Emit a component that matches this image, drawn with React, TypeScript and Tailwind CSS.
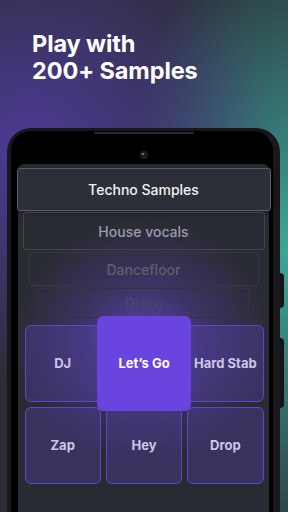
const pads = ["DJ", "Let's Go", "Hard Stab", "Zap", "Hey", "Drop"];

export default function App() {
  return (
    <div
      className="relative w-[288px] h-[512px] overflow-hidden bg-[#2b2d37] bg-[radial-gradient(ellipse_260px_230px_at_10%_150px,#4d3a94_0%,rgba(77,58,148,0.6)_45%,transparent_100%),radial-gradient(ellipse_170px_330px_at_100%_250px,#3ba899_0%,rgba(59,168,153,0.5)_50%,transparent_100%)]"
      style={{ fontFamily: "Inter, 'Noto Sans', sans-serif" }}
    >
      <div className="pt-[30px] pl-[32px] text-[23.5px] leading-[27px] font-bold text-white tracking-[-0.1px]">
        <div>Play with</div>
        <div>200+ Samples</div>
      </div>

      <div className="relative mt-[44px] ml-[7px] w-[273px] h-[384px] bg-[#18181b] rounded-t-[24px] pt-[3px] pl-[4px] pr-[7px]">
        <div className="absolute right-[-4px] top-[145px] w-[4px] h-[35px] bg-[#141416] rounded-r-sm" />
        <div className="absolute right-[-4px] top-[210px] w-[4px] h-[70px] bg-[#141416] rounded-r-sm" />
        <div className="h-full bg-black rounded-t-[20px] pl-[7px] pr-[4px] flex flex-col items-center">
          <div className="mt-[1px] h-[2px] w-[100px] rounded-full bg-[#2a2a2f]" />
          <div className="mt-[17px] w-[8px] h-[8px] rounded-full bg-[#1c1e26] flex items-start justify-start p-[2px]">
            <div className="w-[2px] h-[2px] bg-[#6b6e78]" />
          </div>
          <div className="mt-[5px] self-stretch flex-1 rounded-t-[6px] bg-[#292b33] bg-[radial-gradient(ellipse_130px_120px_at_50%_175px,rgba(120,78,250,0.6)_0%,rgba(120,78,250,0.25)_45%,transparent_100%)] flex flex-col items-center">
            <div className="mt-[4px] w-[254px] h-[43px] shrink-0 flex items-center justify-center bg-[#2c2f38] border border-[#5a5d66] rounded-[3px] text-[14px] font-medium text-[#f2f2f5] shadow-[0_2px_4px_rgba(0,0,0,0.3)]">
              Techno Samples
            </div>
            <div className="mt-[1px] w-[242px] h-[38px] shrink-0 flex items-center justify-center border border-[#41444d] rounded-[3px] text-[14px] font-medium text-[#9a9ca6]">
              House vocals
            </div>
            <div className="mt-[2px] w-[230px] h-[34px] shrink-0 flex items-center justify-center border border-[#363942] rounded-[3px] text-[14px] font-medium text-[#5d6069]">
              Dancefloor
            </div>
            <div className="mt-[2px] w-[211px] h-[30px] shrink-0 flex items-center justify-center border border-[#33353e] rounded-[3px] text-[14px] font-medium text-[#4a4862]">
              Disco
            </div>
            <div className="mt-[7px] ml-[1px] w-[239px] grid grid-cols-3 gap-[5px]">
              {pads.map((p) =>
                p === "Let's Go" ? (
                  <div
                    key={p}
                    className="relative z-10 -m-[9px] h-[95px] flex items-center justify-center rounded-[6px] bg-[#6a44df] text-[13px] font-bold text-white"
                  >
                    Let’s Go
                  </div>
                ) : (
                  <div
                    key={p}
                    className="h-[77px] flex items-center justify-center rounded-[6px] border-[1.5px] border-[#5d45cc] bg-[rgba(104,72,222,0.26)] text-[13px] font-bold text-[#cdc6e8]"
                  >
                    {p}
                  </div>
                )
              )}
            </div>
          </div>
        </div>
      </div>
    </div>
  );
}
